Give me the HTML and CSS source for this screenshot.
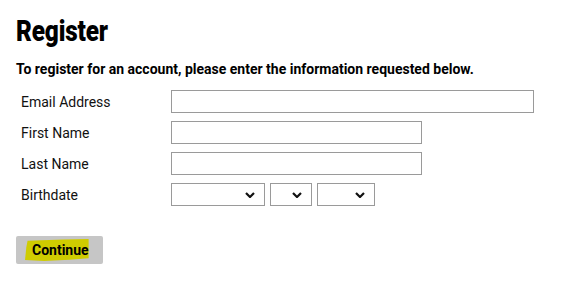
FILE: index.html
```html
<!DOCTYPE html>
<html>
<head>
<meta charset="utf-8">
<link rel="stylesheet" href="styles.css">
</head>
<body>
<div class="page">
  <h1 class="title">Register</h1>
  <p class="intro">To register for an account, please enter the information requested below.</p>
  <form class="form">
    <label class="label">Email Address</label>
    <div class="field"><input class="input input-wide" type="text"></div>
    <label class="label">First Name</label>
    <div class="field"><input class="input input-mid" type="text"></div>
    <label class="label">Last Name</label>
    <div class="field"><input class="input input-mid" type="text"></div>
    <label class="label">Birthdate</label>
    <div class="field selects">
      <select class="select select-month"><option></option></select>
      <select class="select select-day"><option></option></select>
      <select class="select select-year"><option></option></select>
    </div>
  </form>
  <button class="button" type="button"><span class="hl">Continue</span></button>
</div>
</body>
</html>
```
FILE: styles.css
```css
html, body {
  margin: 0;
  padding: 0;
  background: #fff;
}
body {
  font-family: Roboto, "Liberation Sans", sans-serif;
  color: #000;
}
.page {
  padding: 14px 16px 0 16px;
}
.title {
  margin: 0;
  font-size: 29px;
  line-height: 34px;
  font-weight: 900;
  display: inline-block;
  transform: scaleX(0.84);
  transform-origin: left center;
  letter-spacing: -0.2px;
}
.intro {
  margin: 13px 0 0 0;
  font-size: 14px;
  line-height: 16px;
  font-weight: 700;
}
.form {
  display: grid;
  grid-template-columns: 150px auto;
  grid-auto-rows: 23px;
  row-gap: 8px;
  margin: 13px 0 0 5px;
  align-items: center;
}
.label {
  font-size: 14px;
  color: #111;
  line-height: 16px;
}
.field {
  display: flex;
  height: 23px;
}
.input {
  box-sizing: border-box;
  height: 23px;
  border: 1px solid #9a9a9a;
  border-radius: 0;
  padding: 0 4px;
  margin: 0;
  background: #fff;
  outline: none;
}
.input-wide { width: 363px; }
.input-mid { width: 251px; }
.selects {
  gap: 5px;
}
.select {
  box-sizing: border-box;
  height: 23px;
  margin: 0;
  border: 1px solid #9a9a9a;
  border-radius: 0;
  background-color: #fff;
  -webkit-appearance: none;
  appearance: none;
  background-image: url("data:image/svg+xml;utf8,<svg xmlns='http://www.w3.org/2000/svg' width='10' height='6' viewBox='0 0 10 6'><path d='M1 1 L5 5 L9 1' fill='none' stroke='%23111' stroke-width='2.2'/></svg>");
  background-repeat: no-repeat;
  background-position: right 9px center;
  background-size: 10px 6px;
  outline: none;
}
.select-month { width: 94px; }
.select-day { width: 42px; }
.select-year { width: 58px; }
.button {
  margin-top: 30px;
  box-sizing: border-box;
  width: 87px;
  height: 28px;
  background: #c6c6c6;
  border: none;
  border-radius: 2px;
  padding: 0 0 0 16px;
  text-align: left;
  font-family: Roboto, "Liberation Sans", sans-serif;
  font-size: 14px;
  font-weight: 700;
  color: #000;
  display: block;
}
.hl {
  position: relative;
  z-index: 0;
}
.hl::before {
  content: "";
  position: absolute;
  left: -7px;
  right: 0;
  top: -3px;
  bottom: -3px;
  background: #cfcc00;
  z-index: -1;
  clip-path: polygon(4% 8%, 60% 2%, 100% 0%, 100% 88%, 70% 94%, 30% 100%, 0% 96%, 2% 40%);
}
```
